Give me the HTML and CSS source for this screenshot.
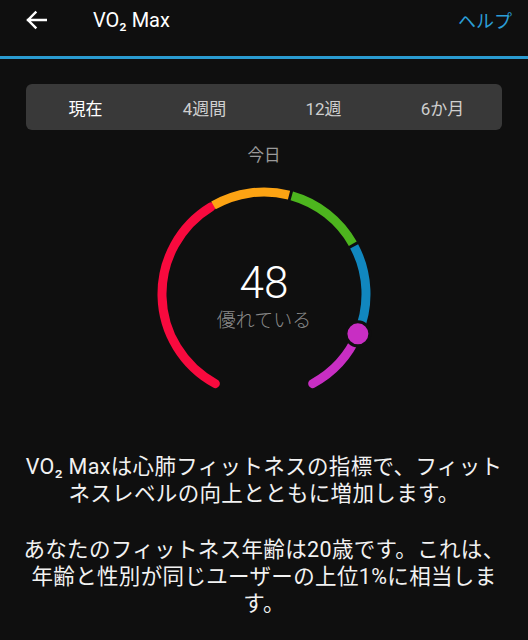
FILE: index.html
```html
<!DOCTYPE html>
<html lang="ja">
<head>
<meta charset="utf-8">
<link rel="stylesheet" href="styles.css">
</head>
<body>
<header class="topbar">
  <svg class="back" width="22" height="20" viewBox="0 0 22 20"><path d="M21 10H3M10.5 2.5L3 10l7.5 7.5" fill="none" stroke="#fff" stroke-width="2.4" stroke-linecap="square"/></svg>
  <div class="title">VO₂ Max</div>
  <div class="help">ヘルプ</div>
</header>
<div class="rule"></div>
<main class="content">
  <nav class="tabs">
    <div class="tab active">現在</div>
    <div class="tab">4週間</div>
    <div class="tab">12週</div>
    <div class="tab">6か月</div>
  </nav>
  <div class="day">今日</div>
  <div class="gauge">
    <svg class="ring" width="240" height="240" viewBox="0 0 240 240">
      <g fill="none" stroke-width="9">
        <path d="M71.33 209.64A102 102 0 0 1 67.01 32.84" stroke="#f80a3e" stroke-linecap="round"/>
        <path d="M69.46 31.4A102 102 0 0 1 145.02 21.12" stroke="#fca313"/>
        <path d="M147.77 21.86A102 102 0 0 1 208.78 69.78" stroke="#4db51e"/>
        <path d="M210.15 72.27A102 102 0 0 1 213.89 159.85" stroke="#1187bf"/>
        <path d="M213.89 159.85A102 102 0 0 1 168.67 209.64" stroke="#c82ec3" stroke-linecap="round"/>
      </g>
      <circle cx="213.89" cy="159.85" r="12" fill="#c82ec3" stroke="#0f0f0f" stroke-width="3"/>
    </svg>
    <div class="readout">
      <div class="value">48</div>
      <div class="level">優れている</div>
    </div>
  </div>
  <p class="para">VO₂ Maxは心肺フィットネスの指標で、フィットネスレベルの向上とともに増加します。</p>
  <p class="para">あなたのフィットネス年齢は20歳です。これは、年齢と性別が同じユーザーの上位1%に相当します。</p>
</main>
</body>
</html>
```
FILE: styles.css
```css
html, body {
  margin: 0;
  padding: 0;
  background: #0f0f0f;
}
body {
  width: 528px;
  height: 640px;
  overflow: hidden;
  font-family: Roboto, "Noto Sans CJK JP", sans-serif;
  color: #f2f2f2;
}
.topbar {
  height: 56px;
  display: flex;
  align-items: center;
  padding: 0 16px 0 25px;
  box-sizing: border-box;
}
.back {
  display: block;
  margin-top: -16px;
}
.title {
  margin-left: 46px;
  margin-top: -16px;
  font-size: 20px;
  color: #fff;
}
.help {
  margin-left: auto;
  margin-top: -16px;
  font-size: 18px;
  color: #2b9ed6;
}
.rule {
  height: 3px;
  background: #2a9bd1;
}
.content {
  padding: 25px 26px 0;
}
.tabs {
  height: 46px;
  background: #393939;
  border-radius: 6px;
  display: grid;
  grid-template-columns: repeat(4, 1fr);
  align-items: center;
}
.tab {
  text-align: center;
  font-size: 17px;
  color: #cfcfcf;
}
.tab.active {
  color: #fff;
}
.day {
  margin-top: 15px;
  text-align: center;
  font-size: 16.5px;
  line-height: 22px;
  color: #9a9a9a;
}
.gauge {
  display: grid;
  justify-items: center;
  margin-top: 7px;
}
.ring {
  grid-area: 1 / 1;
  display: block;
}
.readout {
  grid-area: 1 / 1;
  align-self: start;
  margin-top: 84px;
  text-align: center;
}
.value {
  font-size: 44px;
  font-weight: 300;
  line-height: 50px;
  color: #fff;
}
.level {
  font-size: 19px;
  font-weight: 300;
  line-height: 26px;
  color: #8a8a8a;
}
.para {
  margin: 0 -5px;
  text-align: center;
  font-size: 21.5px;
  letter-spacing: 0.35px;
  line-height: 27px;
  color: #f2f2f2;
}
.para:first-of-type {
  margin-top: 39px;
}
.para + .para {
  margin-top: 29px;
}
```
